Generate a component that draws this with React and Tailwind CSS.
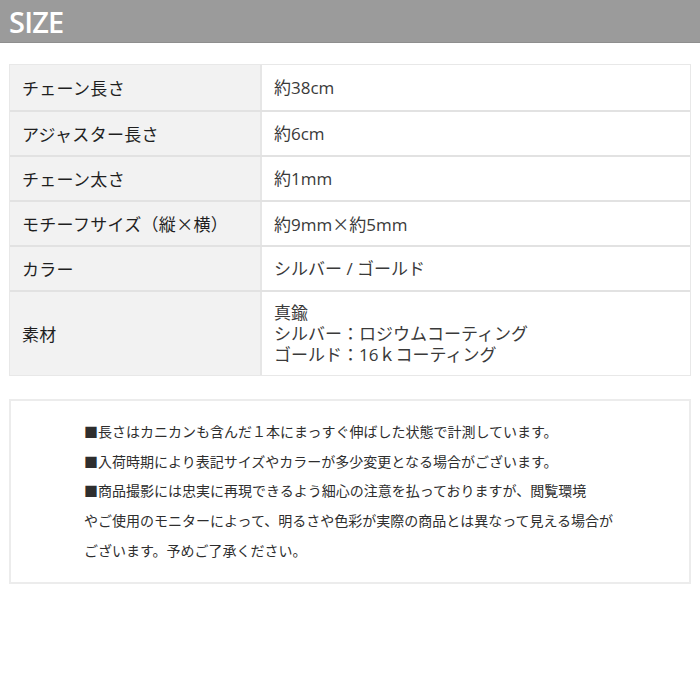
import React from "react";

const rows = [
    { label: "チェーン長さ", value: ["約38cm"] },
    { label: "アジャスター長さ", value: ["約6cm"] },
    { label: "チェーン太さ", value: ["約1mm"] },
    { label: "モチーフサイズ（縦×横）", value: [<>約9mm<span className="font-['Noto_Sans_CJK_JP',sans-serif]">×</span>約5mm</>] },
    { label: "カラー", value: ["シルバー / ゴールド"] },
    { label: "素材", value: ["真鍮", "シルバー：ロジウムコーティング", "ゴールド：16ｋコーティング"], tall: true },
];

const notes = [
    "■長さはカニカンも含んだ１本にまっすぐ伸ばした状態で計測しています。",
    "■入荷時期により表記サイズやカラーが多少変更となる場合がございます。",
    "■商品撮影には忠実に再現できるよう細心の注意を払っておりますが、閲覧環境",
    "やご使用のモニターによって、明るさや色彩が実際の商品とは異なって見える場合が",
    "ございます。予めご了承ください。",
];

export default function App() {
    return (
        <div className="w-[700px] h-[700px] bg-white font-['Open_Sans','Noto_Sans_CJK_JP',sans-serif] text-[#333]">
            {/* Header */}
            <div className="h-[43px] bg-[#9b9b9b] border-b border-[#8e8e8e] flex items-center pl-[9px]">
                <h1 className="text-white text-[29px] font-semibold leading-none tracking-[-0.8px]">SIZE</h1>
            </div>

            {/* Spec table */}
            <div className="mx-[9px] mt-[21px] border border-[#e8e8e8]">
                {rows.map((row, i) => (
                    <div
                        key={row.label}
                        className={`flex ${i > 0 ? "border-t-2 border-[#e2e2e2]" : ""} ${row.tall ? "h-[85px]" : "h-[45px]"}`}
                    >
                        <div className="w-[252px] shrink-0 bg-[#f2f2f2] border-r-2 border-[#e6e6e6] flex items-center pl-[12px] text-[17px] tracking-[0.3px] font-['Noto_Sans_CJK_JP',sans-serif] text-[#1f1f1f]">
                            {row.label}
                        </div>
                        <div className="flex-1 flex flex-col justify-center pl-[12px] text-[17px] leading-[21px] text-[#3a3a3a]">
                            {row.value.map((v, j) => (
                                <span key={j}>{v}</span>
                            ))}
                        </div>
                    </div>
                ))}
            </div>

            {/* Notes */}
            <div className="mx-[9px] mt-[23px] h-[185px] border-2 border-[#ececec] pt-[16px] pl-[73px] font-['Noto_Sans_CJK_JP',sans-serif] text-[14px] leading-[29.7px] text-[#2e2e2e]">
                {notes.map((n) => (
                    <p key={n}>{n}</p>
                ))}
            </div>
        </div>
    );
}
